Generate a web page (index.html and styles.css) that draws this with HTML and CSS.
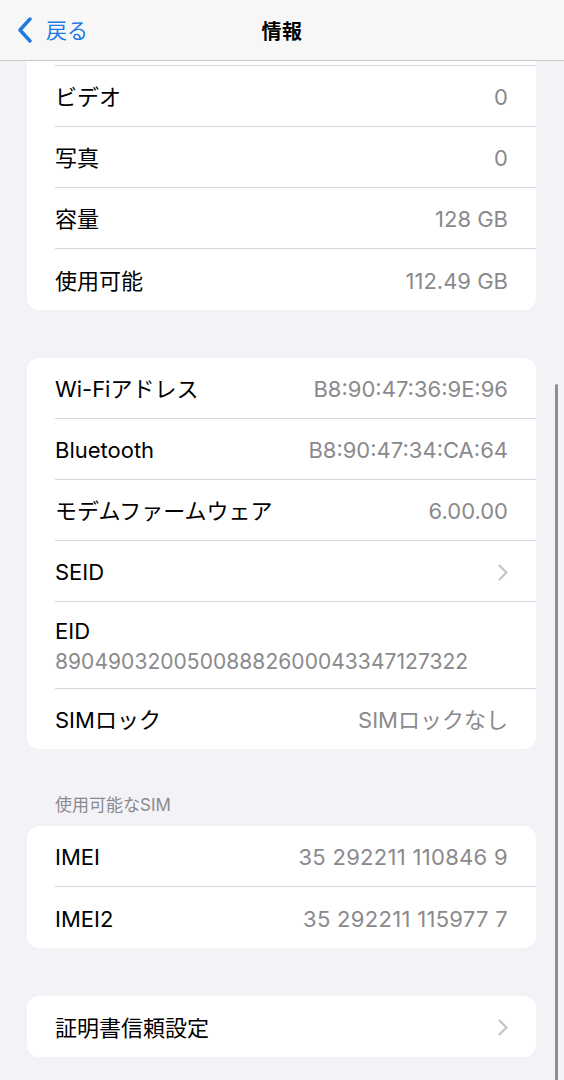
FILE: index.html
```html
<!DOCTYPE html>
<html lang="ja">
<head>
<meta charset="utf-8">
<title>情報</title>
<link rel="stylesheet" href="styles.css">
</head>
<body>
<header class="nav">
  <div class="back">
    <svg class="back-chev" width="16" height="26" viewBox="0 0 16 26"><path d="M13 2 L3 13 L13 24" fill="none" stroke="#1f7ae0" stroke-width="3.4" stroke-linecap="round" stroke-linejoin="round"/></svg>
    <span class="back-label">戻る</span>
  </div>
  <div class="title">情報</div>
</header>
<main class="content">
  <section class="card card-top">
    <div class="slice"></div>
    <div class="row"><span class="label">ビデオ</span><span class="value">0</span></div>
    <div class="row"><span class="label">写真</span><span class="value">0</span></div>
    <div class="row"><span class="label">容量</span><span class="value">128 GB</span></div>
    <div class="row"><span class="label">使用可能</span><span class="value">112.49 GB</span></div>
  </section>

  <section class="card gap">
    <div class="row"><span class="label">Wi-Fiアドレス</span><span class="value">B8:90:47:36:9E:96</span></div>
    <div class="row"><span class="label">Bluetooth</span><span class="value">B8:90:47:34:CA:64</span></div>
    <div class="row"><span class="label">モデムファームウェア</span><span class="value">6.00.00</span></div>
    <div class="row"><span class="label">SEID</span><svg class="chev" width="10" height="17" viewBox="0 0 10 17"><path d="M1.5 1.5 L8.5 8.5 L1.5 15.5" fill="none" stroke="#c4c4c7" stroke-width="2.2" stroke-linecap="round" stroke-linejoin="round"/></svg></div>
    <div class="row row-tall"><span class="label">EID</span><span class="sub">89049032005008882600043347127322</span></div>
    <div class="row"><span class="label">SIMロック</span><span class="value">SIMロックなし</span></div>
  </section>

  <div class="section-header">使用可能なSIM</div>
  <section class="card">
    <div class="row"><span class="label">IMEI</span><span class="value imei">35 292211 110846 9</span></div>
    <div class="row"><span class="label">IMEI2</span><span class="value imei">35 292211 115977 7</span></div>
  </section>

  <section class="card gap-last">
    <div class="row"><span class="label">証明書信頼設定</span><svg class="chev" width="10" height="17" viewBox="0 0 10 17"><path d="M1.5 1.5 L8.5 8.5 L1.5 15.5" fill="none" stroke="#c4c4c7" stroke-width="2.2" stroke-linecap="round" stroke-linejoin="round"/></svg></div>
  </section>
</main>
<div class="scrollbar"></div>
</body>
</html>
```
FILE: styles.css
```css
* { box-sizing: border-box; }
html, body { margin: 0; padding: 0; }
body {
  width: 564px;
  height: 1080px;
  overflow: hidden;
  background: #f2f2f7;
  font-family: "Inter", "Noto Sans CJK JP", sans-serif;
  color: #000;
  position: relative;
}
.nav {
  height: 61px;
  background: #f7f7f8;
  border-bottom: 1px solid #c8c8cc;
  display: grid;
  grid-template-columns: 1fr auto 1fr;
  align-items: center;
}
.back {
  display: flex;
  align-items: center;
  padding-left: 17px;
  gap: 13px;
}
.back-chev { display: block; }
.back-label {
  color: #1f7ae0;
  font-size: 21px;
  line-height: 1;
}
.title {
  font-size: 20px;
  font-weight: 700;
  letter-spacing: 0.5px;
}
.content {
  padding: 0 28px 0 27px;
}
.card {
  background: #fff;
  border-radius: 12px;
  overflow: hidden;
}
.card-top { border-radius: 0 0 12px 12px; }
.gap { margin-top: 48px; }
.gap-last { margin-top: 48px; }
.slice {
  height: 5px;
  margin-left: 28px;
  border-bottom: 1px solid #d6d6da;
}
.row {
  margin-left: 28px;
  padding-right: 28px;
  padding-top: 2px;
  height: 61px;
  display: flex;
  align-items: center;
  justify-content: space-between;
  border-bottom: 1px solid #d6d6da;
  font-size: 22px;
}
.row:last-child { border-bottom: none; }
.card.gap .row:last-child { height: 60px; }
.row-tall {
  height: 87px;
  flex-direction: column;
  align-items: flex-start;
  justify-content: center;
  gap: 7px;
}
.label { line-height: 24px; }
.value { color: #8a8a8e; line-height: 24px; }
.imei { letter-spacing: 0.3px; }
.sub {
  color: #8a8a8e;
  line-height: 24px;
  font-size: 21px;
  letter-spacing: 0.05px;
}
.chev { display: block; margin-right: 0; }
.section-header {
  margin: 46px 0 11px 28px;
  font-size: 17px;
  line-height: 20px;
  color: #8a8a8e;
}
.scrollbar {
  position: absolute;
  right: 6px;
  top: 384px;
  bottom: -10px;
  width: 3px;
  border-radius: 2px;
  background: #8e8e93;
}
```
